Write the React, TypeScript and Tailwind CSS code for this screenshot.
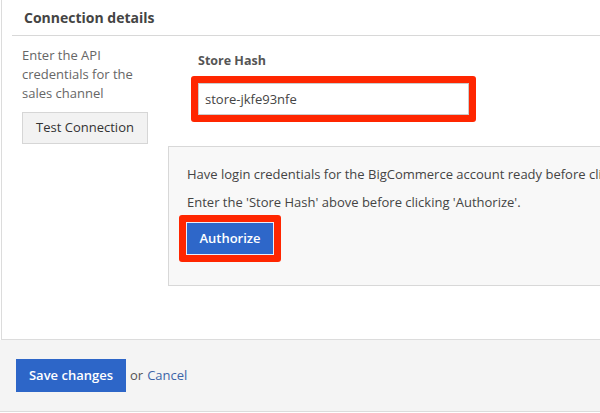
export default function App() {
    return (
        <div
            className="w-[600px] h-[413px] overflow-hidden bg-white text-[13px] text-[#555]"
            style={{ fontFamily: '"Open Sans", "Liberation Sans", sans-serif' }}
        >
            {/* Panel */}
            <div className="ml-px h-[340px] border-l border-b border-[#dcdcdc] bg-white">
                <div className="mx-[10px] mr-0 h-[36px] border-b border-[#d8d8d8] pl-[12px] pt-[6px]">
                    <h2 className="text-[14px] font-bold leading-[24px] text-[#444]">Connection details</h2>
                </div>

                <div className="flex pt-[10px]">
                    {/* Left column */}
                    <div className="w-[166px] shrink-0 pl-[20px]">
                        <p className="w-[120px] leading-[19px] text-[#666]">
                            Enter the API credentials for the sales channel
                        </p>
                        <button className="mt-[9px] h-[32px] w-[126px] border border-[#d6d6d6] bg-[#f2f2f2] text-[13px] text-[#333]">
                            Test Connection
                        </button>
                    </div>

                    {/* Right column */}
                    <div className="flex-1">
                        <div className="pl-[23px]">
                            <label className="block pl-[7px] pt-[6px] text-[12.5px] font-bold leading-[18px] text-[#555]">Store Hash</label>
                            <div className="mt-[6px] w-[285px] rounded-[3px] bg-[#ff2600] p-[7px]">
                                <input
                                    readOnly
                                    value="store-jkfe93nfe"
                                    className="block h-[32px] w-full border border-[#ccc] bg-white px-[6px] text-[13px] text-[#444] outline-none"
                                    style={{ fontFamily: '"Open Sans", "Liberation Sans", sans-serif' }}
                                />
                            </div>
                        </div>

                        <div className="relative mt-[24px] h-[140px] border border-r-0 border-[#d8d8d8] bg-[#f8f8f8] pl-[10px] pt-[17px]">
                            <p className="whitespace-nowrap pl-[8px] leading-[20px] text-[#444]">
                                Have login credentials for the BigCommerce account ready before clicking 'Authorize'.
                            </p>
                            <p className="mt-[8px] whitespace-nowrap pl-[8px] leading-[20px] text-[#444]">
                                Enter the 'Store Hash' above before clicking 'Authorize'.
                            </p>
                            <div className="mt-[3px] inline-block rounded-[3px] bg-[#ff2600] p-[7px]">
                                <button className="block h-[33px] w-[88px] border border-[#e8eefa] bg-[#2e67c9] text-[13px] font-semibold text-white">
                                    Authorize
                                </button>
                            </div>
                            <div className="pointer-events-none absolute right-0 top-[17px] h-[24px] w-[56px] bg-gradient-to-r from-[#f8f8f8]/50 to-[#f8f8f8]/90" />
                        </div>
                    </div>
                </div>
            </div>

            {/* Footer */}
            <div className="flex h-[72px] items-center border-b border-[#dcdcdc] bg-[#f4f4f4] pl-[16px]">
                <button className="h-[33px] w-[110px] bg-[#2d66c8] text-[13px] font-semibold text-white">
                    Save changes
                </button>
                <span className="ml-[4px] text-[#555]">or</span>
                <a className="ml-[4px] text-[#3d64a8]">Cancel</a>
            </div>
        </div>
    );
}
